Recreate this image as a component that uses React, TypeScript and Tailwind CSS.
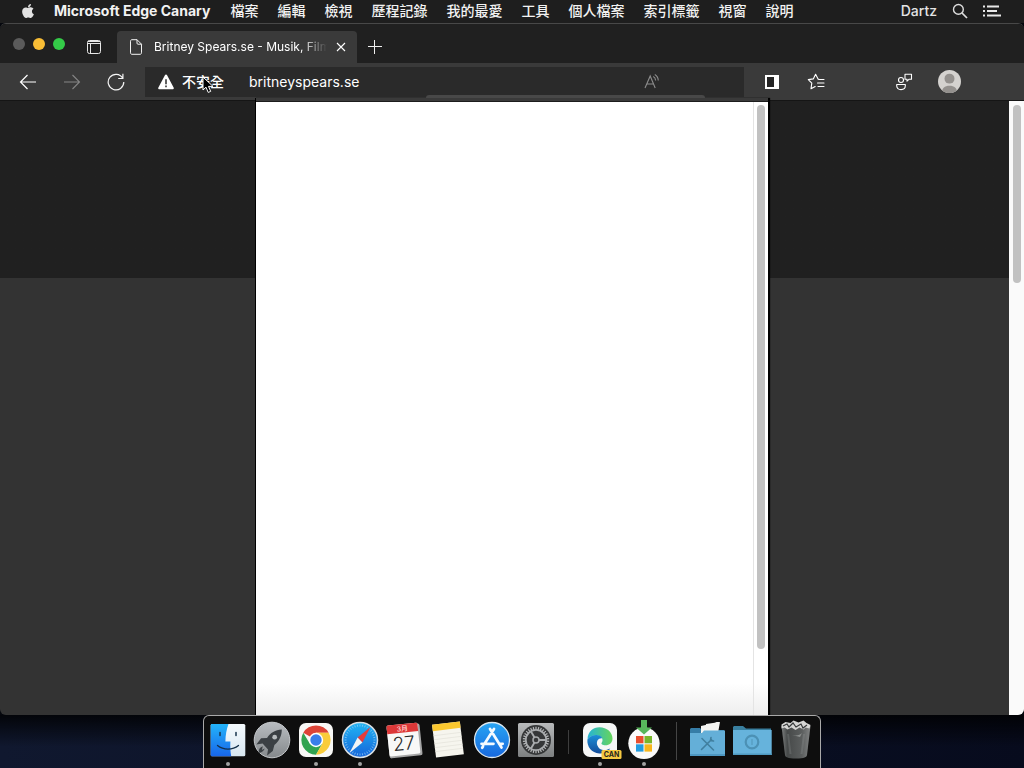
import type { ReactNode } from "react";
import { FaApple } from "react-icons/fa";

const menus = ["檔案", "編輯", "檢視", "歷程記錄", "我的最愛", "工具", "個人檔案", "索引標籤", "視窗", "說明"];

function MenuBar() {
  return (
    <header className="flex h-[23px] shrink-0 items-center bg-[#1e1e1e] pr-[22px] pb-0.5 pl-5 text-sm leading-5 text-[#f2f2f2]">
      <button aria-label="Apple" className="flex w-4 justify-center text-[#e2e2e2]">
        <FaApple className="size-4" />
      </button>
      <nav className="ml-[18px] flex grow items-center gap-[19px] font-medium whitespace-nowrap">
        <button className="pr-px font-bold">Microsoft Edge Canary</button>
        {menus.map((m) => (
          <button key={m}>{m}</button>
        ))}
      </nav>
      <button className="font-medium text-[#e4e4e4]">Dartz</button>
      <button aria-label="Spotlight" className="ml-[15px]">
        <svg className="size-4" viewBox="0 0 16 16" fill="none" stroke="#dedede" strokeWidth="1.4">
          <circle cx="6.4" cy="6.4" r="4.9" />
          <path d="M10 10l5 5" strokeWidth="1.7" />
        </svg>
      </button>
      <button aria-label="Notification Center" className="ml-[14px]">
        <svg className="h-4 w-5" viewBox="0 0 20 16" stroke="#e8e8e8" strokeWidth="1.8">
          <path d="M1 3.5h2M5 3.5h12M1 8h2M5 8h10M1 12.5h2M5 12.5h14" />
        </svg>
      </button>
    </header>
  );
}

function TabStrip() {
  return (
    <div className="flex h-[39px] items-end bg-[#202020]">
      <div className="flex gap-2 self-center pl-[13px]">
        <button aria-label="Close window" className="size-3 rounded-full bg-[#5b5b5b]" />
        <button aria-label="Minimize window" className="size-3 rounded-full bg-[#f9bd35]" />
        <button aria-label="Zoom window" className="size-3 rounded-full bg-[#34cb48]" />
      </div>
      <button aria-label="Tab actions" className="ml-[21px] flex h-8 items-center">
        <svg className="size-4" viewBox="0 0 16 16" fill="none" stroke="#e8e8e8">
          <rect x="1.5" y="1.5" width="13" height="13" rx="2" />
          <path d="M2 2.500h12M1.500 4.500h13M4.500 4.500v10" />
        </svg>
      </button>
      <div role="tab" aria-selected="true" className="ml-[15px] flex h-8 w-60 items-center rounded-t bg-[#3a3a3a] pr-[10px] pl-3 text-white">
        <svg className="h-4 w-[14px] shrink-0" viewBox="0 0 14 16" fill="none" stroke="#f2f2f2" strokeLinejoin="round">
          <path d="M1.5 2.2C1.5 1.3 2 .7 3 .7h5l4.5 4.5v8.6c0 .9-.6 1.5-1.5 1.5H3c-.9 0-1.5-.6-1.5-1.5zM8 .7v3.5c0 .7.4 1 1 1h3.5" />
        </svg>
        <span className="ml-[11px] grow overflow-hidden mask-r-from-85% text-xs whitespace-nowrap">Britney Spears.se - Musik, Film</span>
        <button aria-label="Close tab" className="ml-2">
          <svg className="size-3" viewBox="0 0 12 12" stroke="white" strokeWidth="1.1">
            <path d="M2 2l8 8M10 2l-8 8" />
          </svg>
        </button>
      </div>
      <button aria-label="New tab" className="ml-[10px] flex h-8 items-center">
        <svg className="size-4" viewBox="0 0 16 16" stroke="#f0f0f0">
          <path d="M1 7.5h14M7.5 1v14" />
        </svg>
      </button>
    </div>
  );
}

function Toolbar() {
  return (
    <div className="flex h-[38px] items-center border-b border-[#151515] bg-[#3a3a3a]">
      <button aria-label="Back" className="ml-[19px]">
        <svg className="size-[18px]" viewBox="0 0 18 18" fill="none" stroke="white" strokeWidth="1.2">
          <path d="M17 9H1.5M8.5 2L1.5 9l7 7" />
        </svg>
      </button>
      <button aria-label="Forward" className="ml-[26px]">
        <svg className="size-[18px]" viewBox="0 0 18 18" fill="none" stroke="#858585" strokeWidth="1.1">
          <path d="M1 9h15.5M9.5 2l7 7-7 7" />
        </svg>
      </button>
      <button aria-label="Reload" className="ml-[26px]">
        <svg className="size-[18px]" viewBox="0 0 18 18" fill="none" stroke="#f4f4f4" strokeWidth="1.2">
          <path d="M15.7 5.1A7.8 7.8 0 1 0 16.8 9M15.9.8v4.7h-4.7" />
        </svg>
      </button>
      <div className="relative ml-5 flex h-[30px] grow items-center bg-[#2a2a2a] pr-[83px] pl-[13px] text-sm text-white">
        <button className="flex items-center gap-2 font-medium">
          <svg className="size-4" viewBox="0 0 16 16">
            <path d="M8 .6c.5 0 .9.3 1.1.7l6.5 12.2c.5.9-.1 1.8-1 1.8H1.4c-1 0-1.5-1-1-1.8L6.9 1.3C7.1.9 7.500.6 8 .6z" fill="white" />
            <path d="M8 5.200v5M8 11.600v1.600" stroke="#2a2a2a" strokeWidth="1.500" />
          </svg>
          不安全
        </button>
        <input aria-label="Address" defaultValue="britneyspears.se" className="ml-[25px] min-w-0 grow bg-transparent outline-none" />
        <button aria-label="Read aloud">
          <svg className="size-[17px]" viewBox="0 0 17 17" fill="none" stroke="#8c8c8c" strokeWidth="1.100">
            <path d="M1 15L6.200 3 11.200 15M2.800 11h6.700M9.200 3.600c1.400.7 2.300 2 2.400 3.900M10.800 1.500c2.100 1.200 3.300 3.300 3.500 6" />
          </svg>
        </button>
        <div className="absolute -bottom-px left-[281px] h-[3px] w-[279px] rounded-t-sm bg-[#484848]" />
        <svg className="absolute top-[9px] left-[57px] h-[18px] w-3" viewBox="0 0 12 18">
          <path d="M1 1v13l3-2.800 2.200 5.200 2.500-1-2.200-5H11z" fill="black" stroke="white" />
        </svg>
      </div>
      <button aria-label="Sidebar" className="ml-5">
        <svg className="size-4" viewBox="0 0 16 16">
          <path d="M1 1h14v14H1z" fill="white" />
          <path d="M3 3h7v10H3z" fill="#242424" />
        </svg>
      </button>
      <button aria-label="Favorites" className="ml-[27px]">
        <svg className="size-[18px]" viewBox="0 0 18 18" fill="none" stroke="white" strokeWidth="1.100" strokeLinejoin="round" strokeLinecap="round">
          <path d="M12 6.300h-.8L8.600 1.200 6.300 5.900l-5 .7 3.500 3.600L4 15.800l4.200-2.300M12 6.500h5M10.500 10H17M11 13.500h6" />
        </svg>
      </button>
      <button aria-label="Feedback" className="ml-[70px]">
        <svg className="size-[18px]" viewBox="0 0 18 18" fill="none" stroke="white" strokeWidth="1.100">
          <circle cx="6" cy="7" r="2.500" />
          <path d="M1.700 11.500h8.600v1.300c0 2.400-1.700 3.800-4.300 3.800s-4.300-1.400-4.300-3.800zM10 1.300h6.500v4.900h-2.300l-2.200 2V6.200h-2z" strokeLinejoin="round" />
        </svg>
      </button>
      <button aria-label="Profile" className="mr-[63px] ml-[25px]">
        <svg className="size-[23px]" viewBox="0 0 24 24">
          <clipPath id="profile"><circle cx="12" cy="12" r="12" /></clipPath>
          <g clipPath="url(#profile)">
            <path d="M0 0h24v24H0z" fill="#d4d2cf" />
            <circle cx="12" cy="9" r="5.200" fill="#94918e" />
            <path d="M4 24c0-5 3-7.500 8-7.500s8 2.500 8 7.500z" fill="#94918e" />
          </g>
        </svg>
      </button>
    </div>
  );
}

function DockItem({ label, running, children }: { label: string; running?: boolean; children: ReactNode }) {
  return (
    <button aria-label={label} className="flex w-11 shrink-0 flex-col items-center">
      <svg className="size-11" viewBox="0 0 44 44">{children}</svg>
      {running && <span className="size-1 rounded-full bg-[#a2a2a2]" />}
    </button>
  );
}

const ticks = Array.from({ length: 36 }, (_, i) => i * 10);
const teeth = Array.from({ length: 30 }, (_, i) => i * 12);

function Dock() {
  return (
    <nav aria-label="Dock" className="flex h-[53px] rounded-t-md border border-b-0 border-[#a9a9a9] bg-[#0e0e0e] px-[2px] pt-[2px]">
      <DockItem label="Finder" running>
        <defs>
          <linearGradient id="fl" x2="0" y2="1"><stop stopColor="#23b4fa" /><stop offset="1" stopColor="#1866ea" /></linearGradient>
          <linearGradient id="fr" x2="0" y2="1"><stop stopColor="#f5fbfe" /><stop offset="1" stopColor="#d8e7f1" /></linearGradient>
        </defs>
        <rect x="4.700" y="6" width="34.600" height="32.300" rx="1.500" fill="url(#fr)" />
        <path d="M6 6h16.500c-1.900 5-3 11-3.100 17.500h5c-.3 5 0 10 .8 14.800H6c-.8 0-1.300-.5-1.300-1.300V7.300C4.700 6.500 5.200 6 6 6z" fill="url(#fl)" />
        <path d="M14 14.500v3M30 14.500v3" stroke="#17344c" strokeWidth="1.500" strokeLinecap="round" />
        <path d="M11.500 27.500c6 4.800 15 4.800 21 0" fill="none" stroke="#14304a" strokeWidth="1.300" strokeLinecap="round" />
      </DockItem>
      <DockItem label="Launchpad">
        <linearGradient id="lp" x2="0" y2="1"><stop stopColor="#b9bdc1" /><stop offset="1" stopColor="#85898c" /></linearGradient>
        <circle cx="22" cy="22" r="17.800" fill="url(#lp)" stroke="#c5c8cb" />
        <g transform="translate(-.5 2.500) scale(.95)">
          <path d="M34 9.500c-7 .3-12 3.500-15.500 8.800l-6.300.5-5 6.500 6.600-1.100 5.700 6.300-1 6.300 6-4.600 1.700-6.500C31.500 21.800 34 16 34 9.500z" fill="#3b4044" />
          <circle cx="26.500" cy="17.500" r="2.500" fill="#b7bbbd" />
          <path d="M14 27c-3 1-4.500 3.300-4.500 7 3.500-.2 5.500-1.800 6.500-4.500l-3 1.500z" fill="#3b4044" />
        </g>
      </DockItem>
      <DockItem label="Google Chrome" running>
        <rect x="5" y="5" width="34" height="34" rx="7" fill="#f8f8f6" />
        <path d="M22 22L9.300 14.700A14.700 14.700 0 0 1 34.700 14.700H22z" fill="#dc4437" />
        <path d="M22 22l-6.300 3.600L9.300 14.700A14.700 14.700 0 0 0 22 36.700l6.300-11z" fill="#31a350" />
        <path d="M22 14.700h12.700A14.700 14.700 0 0 1 22 36.700l6.300-11z" fill="#f9cc3b" />
        <circle cx="22" cy="22" r="7.200" fill="white" />
        <circle cx="22" cy="22" r="5.700" fill="#397ee9" />
      </DockItem>
      <DockItem label="Safari" running>
        <linearGradient id="sf" x2="0" y2="1"><stop stopColor="#20b5f4" /><stop offset="1" stopColor="#1664d9" /></linearGradient>
        <circle cx="22" cy="22" r="17.500" fill="url(#sf)" stroke="#d9dfe3" strokeWidth="1.500" />
        {ticks.map((a) => (
          <path key={a} d="M22 6.500v2" stroke="#8fcdf5" strokeWidth=".7" transform={`rotate(${a} 22 22)`} />
        ))}
        <path d="M32.500 9L19.600 19.600l4.800 4.800z" fill="#e63c3c" />
        <path d="M11.500 35l8.100-15.400 4.800 4.800z" fill="#f2f4f5" />
      </DockItem>
      <DockItem label="Calendar">
        <g transform="rotate(-6 22 22)">
          <rect x="6" y="7" width="33" height="32" rx="2" fill="#a7a7a7" />
          <rect x="6" y="6" width="31" height="31" rx="1.500" fill="#f8f8f7" />
          <path d="M6 14.500V7.500C6 6.700 6.700 6 7.500 6h28c.8 0 1.500.7 1.500 1.500v7z" fill="#dc3838" />
          <text x="21.500" y="13" textAnchor="middle" fontSize="7" fontWeight="500" fill="#ffd6d6">3月</text>
          <text x="21.500" y="32" textAnchor="middle" fontSize="19" fontWeight="300" fill="#292929">27</text>
        </g>
      </DockItem>
      <DockItem label="Notes">
        <g transform="rotate(-7 22 22)">
          <path d="M8 5h28v33H8z" fill="#f6f5ee" />
          <path d="M8 5h28v6.500H8z" fill="#fac72f" />
          <path d="M8 16h28M8 20h28M8 24h28M8 28h28M8 32h28" stroke="#e4e2da" strokeWidth=".7" />
        </g>
      </DockItem>
      <DockItem label="App Store">
        <linearGradient id="as" x2="0" y2="1"><stop stopColor="#28a5f3" /><stop offset="1" stopColor="#1768df" /></linearGradient>
        <circle cx="22" cy="22" r="17.500" fill="url(#as)" stroke="#dce7ef" strokeWidth="1.300" />
        <g stroke="#f4faff" strokeWidth="2.700" strokeLinecap="round">
          <path d="M20 11l11.500 18.500M24 11L14.200 26.200M11.500 25.800h12M29 25.800h3.700M13 28.500l-.8 1.300" />
        </g>
      </DockItem>
      <DockItem label="System Preferences">
        <linearGradient id="sp" x2="0" y2="1"><stop stopColor="#b8babb" /><stop offset="1" stopColor="#7d8081" /></linearGradient>
        <rect x="4" y="5" width="36" height="34" rx="1.500" fill="url(#sp)" />
        <circle cx="22" cy="22" r="15" fill="#353738" />
        {teeth.map((a) => (
          <path key={a} d="M22 8.800v3" stroke="#b6b8b9" strokeWidth="1.200" transform={`rotate(${a} 22 22)`} />
        ))}
        <g fill="none" stroke="#a8abad">
          <circle cx="22" cy="22" r="10.200" strokeWidth="1.800" />
          <circle cx="22" cy="22" r="3" strokeWidth="1.500" />
          <path d="M25 22h7M20.500 19.500L17 13.500M20.500 24.500L17 30.500" strokeWidth="1.900" />
        </g>
      </DockItem>
      <div className="flex w-5 justify-center pt-3"><span className="h-6 w-px bg-[#3e3e3e]" /></div>
      <DockItem label="Microsoft Edge Canary" running>
        <defs>
          <linearGradient id="eg"><stop stopColor="#25b4d4" /><stop offset="1" stopColor="#67d55c" /></linearGradient>
          <linearGradient id="eb" x2="0" y2="1"><stop stopColor="#1c8fd7" /><stop offset="1" stopColor="#124c9b" /></linearGradient>
        </defs>
        <rect x="5" y="5" width="34" height="34" rx="7" fill="#f6f7f7" />
        <path d="M9.500 21C10 13.500 15 9.300 21.500 9.300c7.500 0 13 5.200 13 11.200 0 4-3 6.800-7 6.800-3 0-4.800-1.200-3.800-2.500 1.800-2.300.8-6.500-3.700-7.300-4-.7-8 1-10.500 3.500z" fill="url(#eg)" />
        <path d="M9.400 21.500c2-3 5.600-4.700 9.200-4.500 3 .2 5 1.600 5.700 3.300-4-.5-6.300 3-5 7 1.200 3.700 5 5.700 9 4.700l4-1.400c-2.500 3.700-6.700 5.200-11 4.800-7.700-.6-12.500-6.700-11.900-13.900z" fill="url(#eb)" />
        <rect x="23.500" y="32" width="20" height="9" rx="1.500" fill="#f6c942" />
        <text x="33.500" y="39" textAnchor="middle" fontSize="7" fontWeight="700" fill="#28251c">CAN</text>
      </DockItem>
      <DockItem label="Microsoft Update" running>
        <circle cx="22" cy="25.300" r="15.700" fill="#fafafa" />
        <path d="M14 18h7.500v7.300H14z" fill="#e94e2e" />
        <path d="M22.500 18H30v7.300h-7.500z" fill="#78b62b" />
        <path d="M14 26.300h7.500v7.300H14z" fill="#229ce0" />
        <path d="M22.500 26.300H30v7.300h-7.500z" fill="#f7b61c" />
        <path d="M19 2h6v7.500h5l-8 7-8-7h5z" fill="#58b65b" />
      </DockItem>
      <div className="flex w-5 justify-center pt-1"><span className="h-[38px] w-px bg-[#454545]" /></div>
      <DockItem label="Utilities">
        <path d="M4 11l1-1h9l2 2h22v10H4z" fill="#367da7" />
        <path d="M15 8l18-4-1 11H15zM20 6l14-2-2 11H19z" fill="#f4f4f2" />
        <path d="M4 15h12l2-2.500h21V38H4z" fill="#64afd8" />
        <path d="M4 36h35v2H4z" fill="#4d98c3" />
        <g stroke="#407f9f" strokeWidth="1.600" strokeLinecap="round" fill="none">
          <path d="M16 20.500l11.500 11.500M15.500 31.500l10-10M25 19.500l-.5 3 3 .5" />
        </g>
      </DockItem>
      <DockItem label="Folder">
        <path d="M3 12V9l1-1h9l3 2.500h25V20H3z" fill="#397f9f" />
        <path d="M3 12h38.700v25H3z" fill="#66b3dc" />
        <path d="M3 35.500h38.700V37H3z" fill="#4e99c0" />
        <circle cx="22" cy="24" r="6.300" fill="none" stroke="#4c91b5" strokeWidth="2.200" />
        <path d="M22 21v6" stroke="#589fc5" strokeWidth="1.500" />
      </DockItem>
      <DockItem label="Trash">
        <linearGradient id="tr"><stop stopColor="#8a8d8d" /><stop offset=".2" stopColor="#4d5050" /><stop offset=".7" stopColor="#636666" /><stop offset="1" stopColor="#8f9191" /></linearGradient>
        <path d="M7.500 8h29l-3.500 29c-.3 2.300-2.500 3.500-11 3.500s-10.700-1.200-11-3.500z" fill="url(#tr)" fillOpacity=".9" />
        <path d="M14 16l2.500 20M30 16l-2.500 20" stroke="#aaaead" strokeOpacity=".2" strokeWidth="2" />
        <path d="M7.500 6.500l4-2.500 5 1 3-2.500 5 2 5-2 3 2.500 4 2-1 3.500-4-1-2 2-4-2-4 2.500-4-2.500-4 2-3-2-3 1z" fill="#d6d6d4" />
        <path d="M9 8l4-2 2 3 4-4 3 4 5-3 2 4 4-3" stroke="#373a3b" strokeWidth="1.200" fill="none" />
        <path d="M18 17c5 1 8 0 10-2l-2 4z" fill="#afb2b1" fillOpacity=".6" />
      </DockItem>
    </nav>
  );
}

export default function App() {
  return (
    <div className="flex min-h-screen flex-col bg-[#05070d] font-[Inter,'Noto_Sans_CJK_TC',sans-serif]">
      <MenuBar />
      <section className="flex grow flex-col overflow-hidden rounded-md border-t border-[#484848]">
        <TabStrip />
        <Toolbar />
        <main className="flex grow bg-linear-to-b from-[#202020] from-[177px] to-[#333333] to-[177px]">
          <div className="flex-1" />
          <div role="dialog" aria-label="Page preview" className="-mt-[3px] flex w-[514px] flex-col border-x border-black shadow-[1px_0_1px_black]">
            <div className="h-[3px] bg-[#3a3a3a]" />
            <div className="h-px bg-[#1c1c1c]" />
            <div className="flex grow bg-white bg-linear-to-t from-[#eeeeee] to-white to-[32px]">
              <div className="grow" />
              <div className="w-[15px] border-l border-[#e4e4e4] pt-[3px] pl-[3px]">
                <div className="h-[544px] w-2 rounded-full bg-[#c1c1c1]" />
              </div>
            </div>
          </div>
          <div className="flex flex-1 justify-end">
            <div className="w-[15px] bg-[#fafafa] pt-1 pl-1">
              <div className="h-[178px] w-2 rounded-full bg-[#c1c1c1]" />
            </div>
          </div>
        </main>
      </section>
      <footer className="flex shrink-0 bg-linear-to-r from-[#10182f] to-[#070b1d]">
        <div className="flex grow justify-center bg-linear-to-b from-black/80 to-transparent to-60%">
          <Dock />
        </div>
      </footer>
    </div>
  );
}
